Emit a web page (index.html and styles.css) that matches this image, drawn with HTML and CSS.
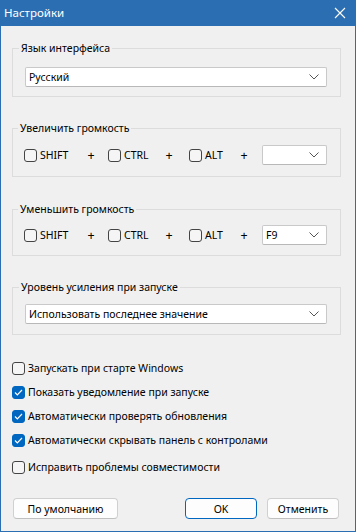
FILE: index.html
```html
<!DOCTYPE html>
<html lang="ru">
<head>
<meta charset="utf-8">
<title>Настройки</title>
<link rel="stylesheet" href="styles.css">
</head>
<body>
<div class="window">
  <div class="titlebar">
    <span class="title">Настройки</span>
    <svg class="close" width="12" height="12" viewBox="0 0 12 12"><path d="M1 1L11 11M11 1L1 11" stroke="#fff" stroke-width="1.1" fill="none"/></svg>
  </div>
  <div class="content">
    <fieldset class="group g1">
      <legend>Язык интерфейса</legend>
      <div class="combo wide"><span>Русский</span><svg class="chev" width="10" height="6" viewBox="0 0 10 6"><path d="M0.5 0.5L5 5L9.5 0.5" stroke="#555" stroke-width="1" fill="none"/></svg></div>
    </fieldset>

    <fieldset class="group g2">
      <legend>Увеличить громкость</legend>
      <div class="hotkey">
        <label class="check"><span class="box"></span>SHIFT</label>
        <span class="plus">+</span>
        <label class="check"><span class="box"></span>CTRL</label>
        <span class="plus">+</span>
        <label class="check"><span class="box"></span>ALT</label>
        <span class="plus">+</span>
        <div class="combo"><span></span><svg class="chev" width="10" height="6" viewBox="0 0 10 6"><path d="M0.5 0.5L5 5L9.5 0.5" stroke="#555" stroke-width="1" fill="none"/></svg></div>
      </div>
    </fieldset>

    <fieldset class="group g3">
      <legend>Уменьшить громкость</legend>
      <div class="hotkey">
        <label class="check"><span class="box"></span>SHIFT</label>
        <span class="plus">+</span>
        <label class="check"><span class="box"></span>CTRL</label>
        <span class="plus">+</span>
        <label class="check"><span class="box"></span>ALT</label>
        <span class="plus">+</span>
        <div class="combo"><span>F9</span><svg class="chev" width="10" height="6" viewBox="0 0 10 6"><path d="M0.5 0.5L5 5L9.5 0.5" stroke="#555" stroke-width="1" fill="none"/></svg></div>
      </div>
    </fieldset>

    <fieldset class="group g4">
      <legend>Уровень усиления при запуске</legend>
      <div class="combo wide"><span>Использовать последнее значение</span><svg class="chev" width="10" height="6" viewBox="0 0 10 6"><path d="M0.5 0.5L5 5L9.5 0.5" stroke="#555" stroke-width="1" fill="none"/></svg></div>
    </fieldset>

    <div class="options">
      <label class="check row"><span class="box"></span>Запускать при старте Windows</label>
      <label class="check row"><span class="box on"><svg width="9" height="7" viewBox="0 0 9 7"><path d="M1 3.5L3.3 5.8L8 1" stroke="#fff" stroke-width="1.2" fill="none"/></svg></span>Показать уведомление при запуске</label>
      <label class="check row"><span class="box on"><svg width="9" height="7" viewBox="0 0 9 7"><path d="M1 3.5L3.3 5.8L8 1" stroke="#fff" stroke-width="1.2" fill="none"/></svg></span>Автоматически проверять обновления</label>
      <label class="check row"><span class="box on"><svg width="9" height="7" viewBox="0 0 9 7"><path d="M1 3.5L3.3 5.8L8 1" stroke="#fff" stroke-width="1.2" fill="none"/></svg></span>Автоматически скрывать панель с контролами</label>
      <label class="check row last"><span class="box"></span>Исправить проблемы совместимости</label>
    </div>
  </div>
  <div class="buttons">
    <button class="btn default-btn">По умолчанию</button>
    <div class="spacer"></div>
    <button class="btn ok">OK</button>
    <button class="btn cancel">Отменить</button>
  </div>
</div>
</body>
</html>
```

FILE: styles.css
```css
* { box-sizing: border-box; }
html, body { margin: 0; padding: 0; }
body {
  font-family: "Noto Sans", "Open Sans", sans-serif;
  font-size: 10.5px;
  color: #000;
  background: #f0f0f0;
}
.window {
  width: 356px;
  height: 532px;
  border: 1px solid #2b6eb2;
  border-top: none;
  background: #f0f0f0;
  display: flex;
  flex-direction: column;
}
.titlebar {
  height: 26px;
  background: #2b6eb2;
  margin: 0 -1px;
  display: flex;
  align-items: center;
  justify-content: space-between;
  padding: 0 10px 0 4px;
  color: #fff;
}
.title { font-size: 11.5px; line-height: 16px; }
.close { display: block; }
.content {
  padding: 14px 14px 0 11px;
  display: flex;
  flex-direction: column;
}
.group {
  margin: 0 0 23px 0;
  border: 1px solid #dcdcdc;
  padding: 8px 13px 10px 12px;
  min-width: 0;
}
.group legend {
  padding: 0 2px;
  margin-left: -6px;
  line-height: 16px;
  height: 16px;
}
.g1 { padding-top: 11px; padding-bottom: 9px; }
.g2 { padding: 9px 13px 11px 11px; margin-bottom: 24px; }
.g3 { padding: 8px 13px 10px 11px; }
.g4 { padding-top: 9px; padding-bottom: 10px; margin-bottom: 21px; }
.combo {
  height: 20px;
  background: #fff;
  border: 1px solid #c9c9c9;
  border-bottom-color: #b8b8b8;
  border-radius: 2px;
  display: flex;
  align-items: center;
  justify-content: space-between;
  padding: 0 7px 0 3px;
  line-height: 16px;
}
.combo .chev { display: block; }
.hotkey {
  display: grid;
  grid-template-columns: 50px 34px 41px 40px 37px 36px 65px;
  align-items: center;
}
.plus { text-align: center; font-size: 12.5px; }
.check {
  display: flex;
  align-items: center;
  gap: 3px;
  line-height: 16px;
}
.box {
  width: 13px;
  height: 13px;
  border: 1px solid #444;
  border-radius: 3px;
  background: #f5f5f5;
  display: flex;
  align-items: center;
  justify-content: center;
  flex: none;
}
.box.on {
  background: #0067c0;
  border-color: #0067c0;
}
.box svg { display: block; }
.options {
  display: flex;
  flex-direction: column;
}
.row { height: 24px; }
.row.last { margin-top: 3px; }
.buttons {
  margin-top: auto;
  padding: 0 16px 12px 12px;
  display: flex;
  align-items: center;
}
.spacer { flex: 1; }
.btn {
  font-family: inherit;
  font-size: 10.5px;
  color: #000;
  height: 21px;
  background: #fdfdfd;
  border: 1px solid #d0d0d0;
  border-bottom-color: #c0c0c0;
  border-radius: 4px;
  padding: 0;
  line-height: 16px;
}
.default-btn { width: 105px; }
.ok { width: 72px; border-color: #0067c0; margin-right: 10px; }
.cancel { width: 72px; }
```
